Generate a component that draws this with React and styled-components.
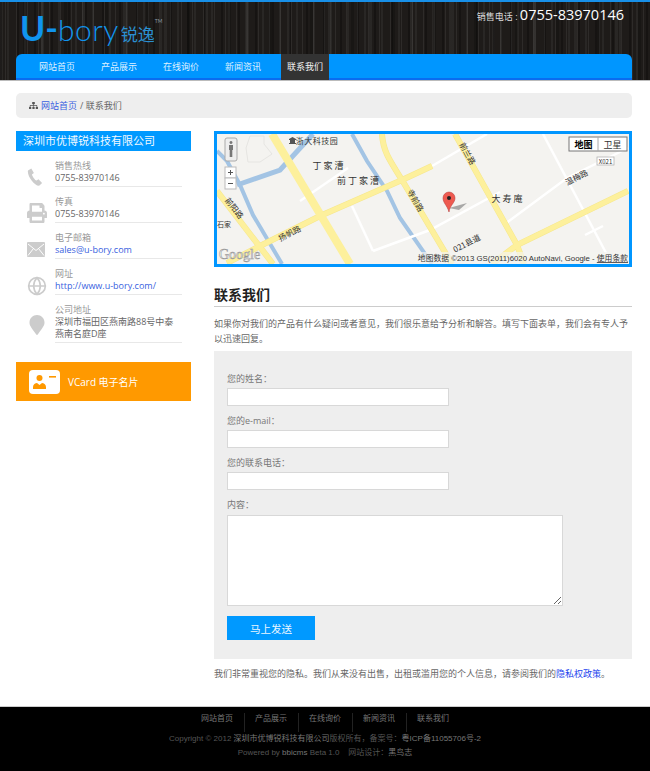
import React from "react";
import styled, { createGlobalStyle } from "styled-components";
import { FaSitemap, FaPrint, FaMapMarker } from "react-icons/fa";
import { FiGlobe } from "react-icons/fi";

const GlobalStyle = createGlobalStyle`
  html, body { margin: 0; padding: 0; background: #fff; }
  body {
    font-family: "Open Sans", "Noto Sans CJK SC", sans-serif;
    font-size: 9px;
    color: #666;
  }
  * { box-sizing: border-box; }
`;

const Page = styled.div`
  width: 650px;
  height: 771px;
  overflow: hidden;
  background: #fff;
`;

const Header = styled.header`
  height: 81px;
  border-top: 2px solid #1890e8;
  border-bottom: 1px solid #bbb;
  background-color: #1e1b19;
  background-image:
    repeating-linear-gradient(90deg, rgba(255,255,255,0) 0 5px, rgba(255,255,255,.07) 5px 6px, rgba(255,255,255,0) 6px 11px),
    repeating-linear-gradient(90deg, rgba(0,0,0,.28) 0 2px, rgba(0,0,0,0) 2px 7px, rgba(255,255,255,.05) 7px 9px, rgba(0,0,0,0) 9px 17px),
    repeating-linear-gradient(90deg, rgba(255,255,255,.05) 0 3px, rgba(0,0,0,0) 3px 23px, rgba(0,0,0,.2) 23px 26px, rgba(0,0,0,0) 26px 41px);
  padding: 0 18px 0 16px;
  display: flex;
  flex-direction: column;
`;

const HeaderTop = styled.div`
  height: 52px;
  display: flex;
  justify-content: space-between;
  align-items: flex-start;
`;

const Logo = styled.div`
  display: flex;
  align-items: baseline;
  margin: 11px 0 0 4px;
  color: #1094ee;
  font-family: "Lato", sans-serif;
  line-height: 30px;
  white-space: nowrap;
`;

const LogoMark = styled.span`
  font-size: 34px;
  font-weight: 700;
`;

const LogoWord = styled.span`
  font-size: 30px;
  font-weight: 300;
  letter-spacing: 0.5px;
`;

const LogoCn = styled.span`
  font-family: "Noto Sans CJK SC", sans-serif;
  font-size: 17px;
  margin-left: 2px;
  color: #2a8fd0;
`;

const LogoTm = styled.sup`
  font-size: 5px;
  line-height: 6px;
  align-self: flex-start;
  margin-top: 5px;
  color: #8a9aa5;
`;

const HotLine = styled.div`
  margin: 1px 8px 0 0;
  color: #ddd;
  font-size: 9px;
  line-height: 24px;
  white-space: nowrap;
  strong {
    font-family: "Open Sans", sans-serif;
    font-weight: 400;
    font-size: 14.5px;
    color: #fff;
  }
`;

const Nav = styled.nav`
  height: 26px;
  background: #0096ff;
  border-bottom: 2px solid #0a6cf0;
  border-radius: 6px 6px 0 0;
  padding-left: 23px;
  display: flex;
  gap: 26px;
`;

const NavItem = styled.a`
  height: 26px;
  padding: ${(p) => (p.$active ? "0 6px" : "0")};
  margin-left: ${(p) => (p.$active ? "-6px" : "0")};
  line-height: 25px;
  font-size: 9px;
  color: ${(p) => (p.$active ? "#f2f2f2" : "#dff1ff")};
  background: ${(p) => (p.$active ? "#333" : "transparent")};
  white-space: nowrap;
`;

const Crumb = styled.div`
  margin: 12px 18px 0 16px;
  height: 25px;
  border-radius: 5px;
  background: #eee;
  display: flex;
  align-items: center;
  padding-left: 13px;
  gap: 3px;
  color: #666;
  svg { color: #555; font-size: 9px; }
`;

const Link = styled.a`
  color: ${(p) => p.$color || "#3a5fe0"};
`;

const Columns = styled.div`
  display: flex;
  gap: 23px;
  padding: 13px 18px 0 16px;
  height: 588px;
`;

const Side = styled.aside`
  width: 175px;
  flex: none;
`;

const SideTitle = styled.h3`
  margin: 0;
  height: 20px;
  background: #0099ff;
  color: #f2f9ff;
  font-size: 11px;
  font-weight: 400;
  line-height: 19px;
  padding-left: 7px;
`;

const ContactRow = styled.div`
  display: flex;
  align-items: flex-start;
  height: ${(p) => (p.$tall ? 48 : 36)}px;
  padding-left: 11px;
`;

const ContactIcon = styled.div`
  width: 28px;
  flex: none;
  display: flex;
  padding-top: ${(p) => p.$top}px;
  color: #ccc;
  font-size: 20px;
`;

const ContactText = styled.div`
  width: 127px;
  height: 100%;
  padding-top: 9px;
  border-bottom: 1px solid #e8e8e8;
  line-height: 12px;
  font-size: 9px;
  color: #666;
`;

const ContactLabel = styled.div`
  color: #999;
`;

const VCard = styled.div`
  margin-top: 19px;
  height: 39px;
  background: #ff9900;
  display: flex;
  align-items: center;
  gap: 8px;
  padding-left: 13px;
  color: #fff;
  font-size: 10px;
`;

const Main = styled.main`
  width: 418px;
  flex: none;
`;

const MapFrame = styled.div`
  height: 136px;
  border: 3px solid #0096ff;
  background: #f4f3f0;
  line-height: 0;
  svg { display: block; }
`;

const Heading = styled.h2`
  margin: 18px 0 0;
  height: 22px;
  border-bottom: 1px solid #ccc;
  color: #222;
  font-size: 14px;
  font-weight: 700;
  line-height: 19px;
`;

const Intro = styled.p`
  margin: 9px 0 0;
  line-height: 15px;
  font-size: 9px;
  color: #666;
`;

const FormPanel = styled.form`
  margin-top: 5px;
  height: 308px;
  background: #eee;
  padding: 18px 13px 0;
  display: flex;
  flex-direction: column;
  align-items: flex-start;
`;

const FieldLabel = styled.label`
  font-size: 9px;
  line-height: 19px;
  color: #777;
`;

const TextInput = styled.input`
  width: 222px;
  height: 18px;
  margin: 0 0 5px;
  padding: 0 4px;
  background: #fff;
  border: 1px solid #d8d8d8;
  outline: none;
`;

const TextBox = styled.textarea`
  width: 336px;
  height: 91px;
  margin: 1px 0 0;
  padding: 4px;
  background: #fff;
  border: 1px solid #d8d8d8;
  outline: none;
  display: block;
`;

const Send = styled.button`
  margin-top: 10px;
  width: 88px;
  height: 24px;
  border: none;
  background: #0099ff;
  color: #eaf6ff;
  font-family: inherit;
  font-size: 10.5px;
`;

const Privacy = styled.p`
  margin: 7px 0 0;
  font-size: 9px;
  line-height: 15px;
  color: #666;
  white-space: nowrap;
`;

const Footer = styled.footer`
  height: 65px;
  background: #000;
  border-top: 1px solid #ccc;
  text-align: center;
  font-family: "Liberation Sans", "Noto Sans CJK SC", sans-serif;
  font-size: 8px;
  color: #555;
`;

const FooterNav = styled.div`
  display: flex;
  justify-content: center;
  padding: 6px 0 0 0;
  height: 25px;
`;

const FooterLink = styled.a`
  color: #777;
  line-height: 12px;
  padding: 0 10.5px;
  border-left: ${(p) => (p.$first ? "none" : "1px solid #222")};
`;

const FooterLine = styled.div`
  line-height: 14px;
  b { color: #777; font-weight: 400; }
`;

const navItems = ["网站首页", "产品展示", "在线询价", "新闻资讯", "联系我们"];

function Phone() {
  return (
    <svg width="18" height="18" viewBox="0 0 18 18" fill="#ccc" style={{ marginTop: 2 }}>
      <path d="M1 2.5 4.3.6l2.6 4.3-2 1.5c.4 1.7 2.8 5.4 4.6 6.2l2-1.3 3.6 3.6-2.6 2.7c-2 .6-5.3-1.6-7.7-4.9C2.2 9.3.3 5.2 1 2.500z" />
    </svg>
  );
}

function Mail() {
  return (
    <svg width="18" height="15" viewBox="0 0 18 15">
      <rect width="18" height="15" rx="1" fill="#ccc" />
      <path d="M1 2l8 6.500L17 2M1 13.500l5.500-7M17 13.500l-5.500-7" fill="none" stroke="#fff" strokeWidth="1" />
    </svg>
  );
}

function CardIcon() {
  return (
    <svg width="31" height="24" viewBox="0 0 31 24">
      <rect width="31" height="24" rx="4" fill="#fff" />
      <circle cx="10.5" cy="8" r="3" fill="#ff9900" />
      <path d="M4 19v-2c0-2.4 2.4-4 4-4l2.5 2 2.5-2c1.6 0 4 1.6 4 4v2z" fill="#ff9900" />
      <rect x="20" y="6" width="7" height="1.6" fill="#ff9900" />
    </svg>
  );
}

const labelStyle = { fontFamily: '"Noto Sans CJK SC", sans-serif', fill: "#333" };

function MapLabel({ x, y, size = 9, rotate = 0, children, spacing = 2 }) {
  return (
    <text
      x={x}
      y={y}
      fontSize={size}
      letterSpacing={spacing}
      style={labelStyle}
      textAnchor="middle"
      transform={rotate ? `rotate(${rotate} ${x} ${y})` : undefined}
    >
      {children}
    </text>
  );
}

function MapView() {
  const yellow = [
    "M227 263 260 246 320 216 402 180 432 166",
    "M217 191 273 264",
    "M382 134C383 150 388 158 402 180L452 264",
    "M455 134 517 245 524 264",
    "M628 191 517 245 492 264",
  ];
  const white = [
    "M300 201 348 168",
    "M352 206 373 251",
    "M373 251 430 230 500 192",
    "M505 224 567 178 628 148",
    "M432 166 487 134",
    "M543 134 605 251 612 264",
    "M585 235 603 226",
  ];
  return (
    <svg width="412" height="130" viewBox="217 134 412 130">
      <rect x="217" y="134" width="412" height="130" fill="#f4f3f0" />
      <g fill="none" stroke="#a3c4e4">
        <path d="M237 185 280 170 313 134" strokeWidth="5" />
        <path d="M217 151 227 161 240 185 253 215 282 264" strokeWidth="4" />
        <path d="M352 134 367 161 387 191 400 218 432 264" strokeWidth="4" />
      </g>
      <path d="M250 136h14v8l8 10-12 8h-12l-2-14z" fill="none" stroke="#e6e5e2" strokeWidth="1" />
      <g fill="none" stroke="#fff" strokeWidth="2.5">
        {white.map((d) => <path key={d} d={d} />)}
      </g>
      <g fill="none" stroke="#f6e78c" strokeWidth="6">
        {yellow.map((d) => <path key={d} d={d} />)}
      </g>
      <g fill="none" stroke="#fdf09c" strokeWidth="5">
        {yellow.map((d) => <path key={d} d={d} />)}
      </g>
      <path d="M272 134 350 264" fill="none" stroke="#fdf09c" strokeWidth="8" />

      <MapLabel x={317} y={144} size={8} spacing={0.5}>浙大科技园</MapLabel>
      <path d="M289 144v-1h1v-3h-1v-1l3.500-2 3.500 2v1h-1v3h1v1z" fill="#555" />
      <MapLabel x={329} y={169}>丁家漕</MapLabel>
      <MapLabel x={359} y={184}>前丁家漕</MapLabel>
      <MapLabel x={224} y={227} size={7} spacing={0}>石家</MapLabel>
      <MapLabel x={232} y={210} size={8} spacing={0} rotate={52}>前阳路</MapLabel>
      <MapLabel x={291} y={236} size={8} spacing={0} rotate={-27}>扬帆路</MapLabel>
      <MapLabel x={413} y={202} size={8} spacing={0} rotate={60}>寺前路</MapLabel>
      <MapLabel x={465} y={155} size={8} spacing={0} rotate={62}>前兰路</MapLabel>
      <MapLabel x={508} y={202}>大寿庵</MapLabel>
      <MapLabel x={578} y={180} size={8} spacing={0} rotate={-27}>温梅路</MapLabel>
      <MapLabel x={468} y={246} size={8} spacing={0} rotate={-27}>021县道</MapLabel>

      <rect x="597" y="157" width="17" height="8" fill="#fff" stroke="#aaa" strokeWidth=".7" />
      <text x="605.500" y="163.500" fontSize="6" textAnchor="middle" style={labelStyle}>X021</text>

      {/* marker */}
      <path d="M449 208 467 203 459 210z" fill="#888" opacity=".7" />
      <path d="M449 212C447 205 443 203 443 198a6 6 0 0 1 12 0c0 5-5 7-6 14z" fill="#ee5a50" stroke="#b03030" strokeWidth=".5" />
      <circle cx="449" cy="198" r="2" fill="#222" />

      {/* pegman + zoom */}
      <rect x="225" y="138" width="12" height="23" rx="2" fill="#eee" stroke="#aaa" />
      <path d="M231 141a1.500 1.500 0 1 1-.01 0zM229 145h4v5h-.7v7h-2.600v-7H229z" fill="#777" />
      <rect x="225" y="167" width="11" height="11" fill="#fff" stroke="#bbb" />
      <rect x="225" y="178" width="11" height="11" fill="#fff" stroke="#bbb" />
      <path d="M228 172.500h5M230.500 170v5M228 183.500h5" stroke="#555" />

      {/* map type switch */}
      <rect x="569" y="137" width="58" height="14" fill="#fff" stroke="#777" />
      <path d="M598 137v14" stroke="#aaa" />
      <text x="583.500" y="148" fontSize="9" fontWeight="700" textAnchor="middle" style={{ ...labelStyle, fill: "#000" }}>地图</text>
      <text x="612.500" y="148" fontSize="9" textAnchor="middle" style={labelStyle}>卫星</text>

      {/* attribution */}
      <rect x="415" y="252" width="214" height="12" fill="#f4f3f0" opacity=".7" />
      <text x="628" y="261" fontSize="7.800" textAnchor="end" style={{ ...labelStyle, fontFamily: '"Liberation Sans", "Noto Sans CJK SC", sans-serif' }}>
        地图数据 ©2013 GS(2011)6020 AutoNavi, Google - <tspan textDecoration="underline">使用条款</tspan>
      </text>
      <text x="219" y="259" fontSize="14" style={{ fontFamily: '"Liberation Serif", serif', fill: "#fff", stroke: "#999", strokeWidth: 0.6 }}>Google</text>
    </svg>
  );
}

export default function App() {
  return (
    <Page>
      <GlobalStyle />
      <Header>
        <HeaderTop>
          <Logo>
            <LogoMark>U-</LogoMark>
            <LogoWord>bory</LogoWord>
            <LogoCn>锐逸</LogoCn>
            <LogoTm>TM</LogoTm>
          </Logo>
          <HotLine>
            销售电话 : <strong>0755-83970146</strong>
          </HotLine>
        </HeaderTop>
        <Nav>
          {navItems.map((name, i) => (
            <NavItem key={name} $active={i === 4}>{name}</NavItem>
          ))}
        </Nav>
      </Header>

      <Crumb>
        <FaSitemap />
        <Link>网站首页</Link> / 联系我们
      </Crumb>

      <Columns>
        <Side>
          <SideTitle>深圳市优博锐科技有限公司</SideTitle>
          <ContactRow>
            <ContactIcon $top={15}><Phone /></ContactIcon>
            <ContactText>
              <ContactLabel>销售热线</ContactLabel>
              0755-83970146
            </ContactText>
          </ContactRow>
          <ContactRow>
            <ContactIcon $top={16}><FaPrint /></ContactIcon>
            <ContactText>
              <ContactLabel>传真</ContactLabel>
              0755-83970146
            </ContactText>
          </ContactRow>
          <ContactRow>
            <ContactIcon $top={19}><Mail /></ContactIcon>
            <ContactText>
              <ContactLabel>电子邮箱</ContactLabel>
              <Link>sales@u-bory.com</Link>
            </ContactText>
          </ContactRow>
          <ContactRow>
            <ContactIcon $top={17}><FiGlobe /></ContactIcon>
            <ContactText>
              <ContactLabel>网址</ContactLabel>
              <Link>http://www.u-bory.com/</Link>
            </ContactText>
          </ContactRow>
          <ContactRow $tall>
            <ContactIcon $top={20}><FaMapMarker /></ContactIcon>
            <ContactText>
              <ContactLabel>公司地址</ContactLabel>
              深圳市福田区燕南路88号中泰<br />燕南名庭D座
            </ContactText>
          </ContactRow>
          <VCard>
            <CardIcon />
            VCard 电子名片
          </VCard>
        </Side>

        <Main>
          <MapFrame><MapView /></MapFrame>
          <Heading>联系我们</Heading>
          <Intro>如果你对我们的产品有什么疑问或者意见，我们很乐意给予分析和解答。填写下面表单，我们会有专人予以迅速回复。</Intro>
          <FormPanel>
            <FieldLabel>您的姓名：</FieldLabel>
            <TextInput />
            <FieldLabel>您的e-mail：</FieldLabel>
            <TextInput />
            <FieldLabel>您的联系电话：</FieldLabel>
            <TextInput />
            <FieldLabel>内容：</FieldLabel>
            <TextBox />
            <Send type="button">马上发送</Send>
          </FormPanel>
          <Privacy>
            我们非常重视您的隐私。我们从来没有出售，出租或滥用您的个人信息，请参阅我们的<Link $color="#2244ee">隐私权政策</Link>。
          </Privacy>
        </Main>
      </Columns>

      <Footer>
        <FooterNav>
          {navItems.map((name, i) => (
            <FooterLink key={name} $first={i === 0}>{name}</FooterLink>
          ))}
        </FooterNav>
        <FooterLine>
          Copyright © 2012 <b>深圳市优博锐科技有限公司</b>版权所有，备案号：<b>粤ICP备11055706号-2</b>
        </FooterLine>
        <FooterLine>
          Powered by <b>bbicms</b> Beta 1.0 &nbsp;&nbsp; 网站设计：<b>黑鸟志</b>
        </FooterLine>
      </Footer>
    </Page>
  );
}
